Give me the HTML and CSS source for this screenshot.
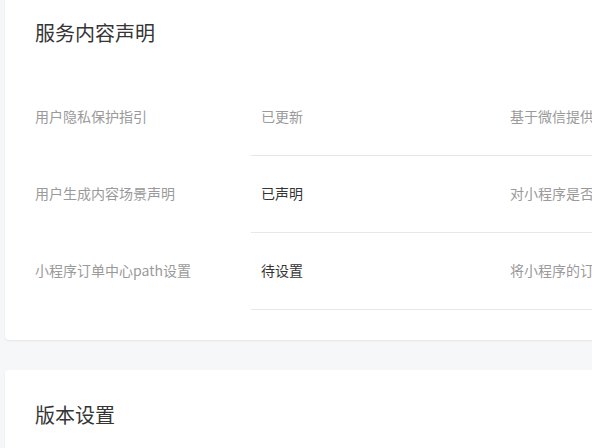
FILE: index.html
```html
<!DOCTYPE html>
<html lang="zh-CN">
<head>
    <meta charset="UTF-8">
    <meta name="viewport" content="width=device-width, initial-scale=1.0">
    <title>设置</title>
    <link rel="stylesheet" href="styles.css">
</head>
<body>
    <div class="page">
        <div class="card">
            <h2 class="card-title">服务内容声明</h2>
            <div class="decl-list">
                <div class="decl-row">
                    <div class="decl-label">用户隐私保护指引</div>
                    <div class="decl-status muted">已更新</div>
                    <div class="decl-desc">基于微信提供的标准化用户隐私保护指引，开发者需如实填写小程序收集用户信息的情况</div>
                </div>
                <div class="decl-row">
                    <div class="decl-label">用户生成内容场景声明</div>
                    <div class="decl-status">已声明</div>
                    <div class="decl-desc">对小程序是否存在用户生成内容的场景进行声明</div>
                </div>
                <div class="decl-row">
                    <div class="decl-label">小程序订单中心path设置</div>
                    <div class="decl-status">待设置</div>
                    <div class="decl-desc">将小程序的订单中心页面路径提交至微信</div>
                </div>
            </div>
        </div>

        <div class="card">
            <h2 class="card-title">版本设置</h2>
        </div>
    </div>
</body>
</html>
```

FILE: styles.css
```css
body {
    margin: 0;
    background: #f6f7f9;
    font-family: "Noto Sans CJK SC", "Liberation Sans", sans-serif;
    color: #353535;
    overflow: hidden;
}

.page {
    width: 960px;
    margin-top: -12px;
    padding-left: 5px;
    display: flex;
    flex-direction: column;
    gap: 30px;
}

.card {
    background: #fff;
    border-radius: 4px;
    box-shadow: 0 1px 2px rgba(0, 0, 0, 0.08);
    padding: 31px 30px 30px;
}

.card-title {
    margin: 0;
    font-size: 20px;
    font-weight: normal;
    line-height: 28px;
    color: #353535;
}

.decl-list {
    margin-top: 32px;
}

.decl-row {
    display: grid;
    grid-template-columns: 216px 249px 1fr;
    height: 77px;
    font-size: 14px;
}

.decl-row > div {
    display: flex;
    align-items: center;
    padding-bottom: 3px;
    white-space: nowrap;
    overflow: hidden;
}

.decl-label {
    color: #9a9a9a;
}

.decl-status,
.decl-desc {
    border-bottom: 1px solid #e7e7eb;
}

.decl-status {
    padding-left: 10px;
    color: #353535;
}

.decl-status.muted {
    color: #9a9a9a;
}

.decl-desc {
    padding-left: 10px;
    color: #9a9a9a;
}
```
